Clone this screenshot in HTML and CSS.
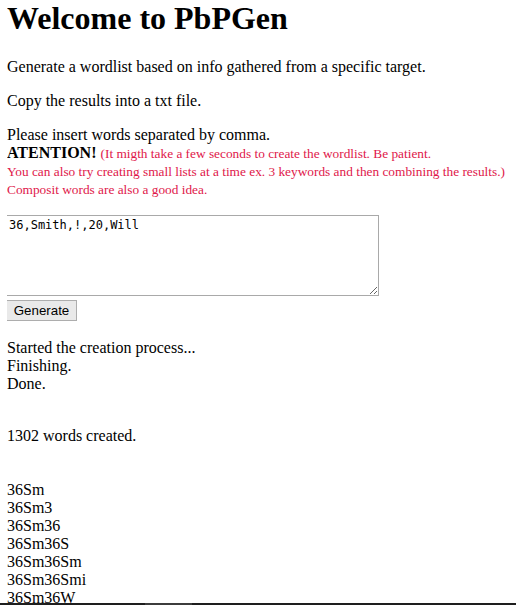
FILE: index.html
```html
<!DOCTYPE html>
<html>
<head>
<meta charset="utf-8">
<title>PbPGen</title>
<link rel="stylesheet" href="styles.css">
</head>
<body>
<h1 class="title">Welcome to PbPGen</h1>
<p class="text">Generate a wordlist based on info gathered from a specific target.</p>
<p class="text">Copy the results into a txt file.</p>
<p class="text">Please insert words separated by comma.<br><b>ATENTION!</b> <span class="warn">(It migth take a few seconds to create the wordlist. Be patient.<br>You can also try creating small lists at a time ex. 3 keywords and then combining the results.)<br>Composit words are also a good idea.</span></p>
<form class="gen-form">
<textarea class="words-input">36,Smith,!,20,Will</textarea>
<button type="button" class="gen-btn">Generate</button>
</form>
<p class="text status">Started the creation process...<br>Finishing.<br>Done.</p>
<p class="text"><br>1302 words created.<br><br><br>36Sm<br>36Sm3<br>36Sm36<br>36Sm36S<br>36Sm36Sm<br>36Sm36Smi<br>36Sm36W</p>
<div class="bottom-edge"><span class="edge-light"></span></div>
</body>
</html>
```

FILE: styles.css
```css
html {
  overflow: hidden;
}
body {
  margin: 0 8px 0 7px;
  font-family: "Liberation Serif", "Times New Roman", serif;
  font-size: 16px;
  color: #000;
  background: #fff;
}
.title {
  font-size: 32px;
  font-weight: bold;
  margin: 0 0 21.44px 0;
}
.text {
  margin: 16px 0;
}
.status {
  margin-top: 18px;
}
.warn {
  color: #e0174a;
  font-size: 13.33px;
}
.gen-form {
  margin: 17px 0 0 0;
  display: flex;
  flex-direction: column;
  align-items: flex-start;
}
.words-input {
  box-sizing: border-box;
  width: 373px;
  height: 81px;
  margin: 0 0 4px -1px;
  padding: 2px;
  border: 1px solid #a9a9a9;
  font-family: "DejaVu Sans Mono", monospace;
  font-size: 12px;
  color: #000;
  display: block;
  resize: both;
}
.gen-btn {
  margin: 0 0 0 -1px;
  box-sizing: border-box;
  height: 21px;
  width: 71px;
  padding: 0 6px;
  border: 1px solid #adadad;
  border-radius: 0;
  background: #e9e9e9;
  font-family: "Liberation Sans", Arial, sans-serif;
  font-size: 13.33px;
  color: #000;
}
.bottom-edge {
  position: fixed;
  left: 0;
  right: 0;
  bottom: 0;
  height: 2px;
  background: #1e1e1e;
}
.edge-light {
  position: absolute;
  left: 145px;
  width: 47px;
  top: 0;
  height: 2px;
  background: #3c3c3c;
}
```
